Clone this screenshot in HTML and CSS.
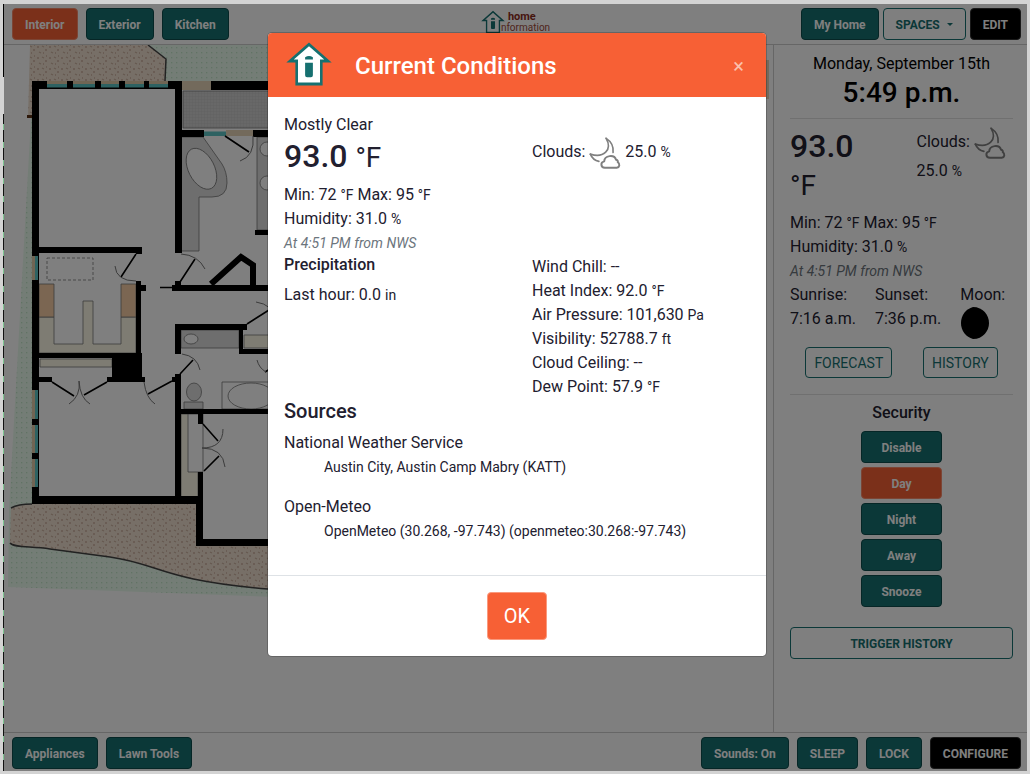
FILE: index.html
```html
<!DOCTYPE html>
<html lang="en">
<head>
<meta charset="utf-8">
<meta name="viewport" content="width=device-width, initial-scale=1">
<title>Home Information</title>
<link rel="stylesheet" href="styles.css">
</head>
<body class="page">
<svg class="defs" aria-hidden="true">
  <symbol id="house" viewBox="76 122 142 138">
    <path fill="currentColor" d="M147 125 217 186H189V257H105V186H77Z"/>
    <path fill="#fff" d="M147 136 194 177H181V248H113V177H100Z"/>
    <path fill="currentColor" d="M135 170Q147 162 159 170V177H135ZM135 187H159V226Q159 232 153 232H141Q135 232 135 226Z"/>
  </symbol>
  <symbol id="night-cloud" viewBox="268 51 97 97">
    <g fill="none" stroke="#808080" stroke-width="5" stroke-linecap="round" stroke-linejoin="round">
      <path d="M320 55C334 64 343 80 341 98"/>
      <path d="M320 55C340 90 312 116 272 103"/>
      <path d="M272 103C277 115 287 123 298 125"/>
      <path d="M316 144C303 143 302 128 314 125C315 106 345 103 350 120C356 121 356 126 355 127C363 133 361 143 352 144Z" stroke-width="6"/>
    </g>
  </symbol>
</svg>
<div class="edge"></div>
<div class="app">
  <header class="bar bar-top">
    <nav class="group">
      <button class="btn btn-active">Interior</button>
      <button class="btn">Exterior</button>
      <button class="btn">Kitchen</button>
    </nav>
    <div class="brand">
      <svg class="brand-icon" aria-hidden="true"><use href="#house"/></svg>
      <div class="brand-text"><span class="brand-home">home</span><span class="brand-info">nformation</span></div>
    </div>
    <div class="group group-end group-tight">
      <button class="btn">My Home</button>
      <button class="btn btn-outline" aria-haspopup="true">SPACES <span class="caret"></span></button>
      <button class="btn btn-dark">EDIT</button>
    </div>
  </header>

  <div class="middle">
    <main class="plan">
      <svg class="plan-drawing" viewBox="4 45 769 687" preserveAspectRatio="xMinYMin slice" role="img" aria-label="Floor plan">
        <defs>
          <pattern id="stone" width="12" height="11" patternUnits="userSpaceOnUse">
            <rect width="12" height="11" fill="#eedfcf"/>
            <path d="M1 3h2M6 2l2 1M9 6h2M3 8l2 1M7 9h1M10 1h1" stroke="#cdb09f" stroke-width="1.3"/>
          </pattern>
          <pattern id="grass" width="5" height="5" patternUnits="userSpaceOnUse">
            <rect width="5" height="5" fill="#e9fbed"/>
            <rect x="1" y="2" width="1.3" height="1.3" fill="#c3e6c9"/>
          </pattern>
          <pattern id="pin" width="3" height="3" patternUnits="userSpaceOnUse">
            <rect width="3" height="3" fill="#d0d0d0"/>
            <path d="M0 0V3M0 0H3" stroke="#bcbcbc" stroke-width=".6"/>
          </pattern>
        </defs>
        <path fill="url(#grass)" d="M140 45H300V84H140ZM31 118H34V505H200V546H300V598L8 587 9 510Z"/>
        <path fill="url(#stone)" d="M30 45H148L166 59 165 84H32V118H28Z"/>
        <path d="M148 45 166 59 165 81" fill="none" stroke="#444" stroke-width="1.5"/>
        <path d="M27 116.500H33" stroke="#5c3317" stroke-width="3"/>
        <path fill="#fff" d="M32 81H300V546H197V504H32Z"/>
        <path fill="url(#stone)" d="M32 504Q18 504 11 508L10 543C14 548 30 546 50 549C80 553 95 555 110 557C160 564 160 580 268 589H300V546H197V504Z"/>
        <path fill="none" stroke="#444" stroke-width="1.5" d="M32 504Q18 504 11 508M10 543C14 548 30 546 50 549C80 553 95 555 110 557C160 564 160 580 268 589"/>

        <g stroke="#777" stroke-width=".8">
          <path fill="url(#pin)" d="M183 91H300V128H183Z"/>
          <path fill="#dcdcdc" d="M181 137H203L222 164Q227 172 227 183Q227 197 212 197H199V251H181ZM257 137H300V230H257Z"/>
          <ellipse fill="#fff" cx="201.500" cy="169" rx="13" ry="22" transform="rotate(-27 201 169)"/>
          <circle fill="#fff" cx="267" cy="149" r="7"/><circle fill="#fff" cx="267" cy="183" r="7"/>
          <path fill="none" stroke-dasharray="3 2" d="M47 258H93V280H47Z"/>
          <path fill="#fcf8e6" d="M39 317H54V344H83V301H93V344H121V317H136V353H39ZM40 359H112V367H40ZM244 335H300V348H244ZM181 414H198V497H181Z"/>
          <path fill="#f6cda4" d="M39 284H54V317H39ZM121 284H136V317H121Z"/>
          <path fill="#fff" d="M188 414H203V472H188Z"/>
          <path fill="#dcdcdc" d="M181 330H239V348H181ZM184 402H203V409H184Z"/>
          <ellipse fill="#fff" cx="191" cy="339" rx="7" ry="5"/>
          <ellipse fill="#dcdcdc" cx="194" cy="392" rx="7.500" ry="9"/>
          <path fill="none" d="M222 382H300V409H222Z"/>
          <ellipse fill="#fff" cx="251" cy="396" rx="23" ry="13"/>
        </g>
        <path d="M32 81H182V137H175V89H32ZM182 130H204V137H182ZM175 89H182V253H175ZM32 81H39V504H32ZM39 247H142V254H136V253H39ZM136 281H141V285H146V291H141V382H136ZM39 353H141V358H39ZM112 353H142V382H112ZM107 377H145V382H107ZM39 377H52V382H39ZM172 285H300V291H172ZM175 281H181V285H175ZM253 130H300V137H253ZM211 81H300V90H211ZM255 230H300V235H255ZM175 324H247V330H181V354H175ZM239 330H243V349H300V354H239ZM172 377H175V374H181V409H300V414H181V497H175V382H172ZM198 414H203V424H198ZM32 496H198V504H32ZM198 472H203V539H300V546H196V496H198Z"/>
        <path fill="#e6d4b8" d="M182 81H211V90H182ZM226 130H253V136H226ZM740 60H769V99H740Z"/>
        <path fill="#e0cba8" d="M47 81H67V84H47ZM73 81H95V84H73ZM101 81H119V84H101ZM125 81H144V84H125ZM149 81H168V84H149ZM32 256H35V280H32ZM32 390H35V419H32ZM32 425H35V453H32ZM32 459H35V487H32Z"/>
        <path fill="#5cc4c4" d="M47 84H67V87.500H47ZM73 84H95V87.500H73ZM101 84H119V87.500H101ZM125 84H144V87.500H125ZM149 84H168V87.500H149ZM35 256H38V280H35ZM35 390H38V419H35ZM35 425H38V453H35ZM35 459H38V487H35ZM204 131.500H226V136H204Z"/>
        <path d="M211 284 241 257 253 265V288" fill="none" stroke="#000" stroke-width="6"/>
        <path d="M136 254 121 277M180 282 195 259M160 287.500H172M225 136 249 152M52 382 74 396M107 382 84 395M172 381 148 394M180 374 193 360M247 324 269 310M203 424 218 441M204 471 219 456M265 372 270 369" fill="none" stroke="#000" stroke-width="1.600"/>
        <path d="M115 266Q116 281 136 281M181 254Q198 255 205 269M253 136Q255 156 240 161M79 381Q81 396 69 404M79 381Q80 398 90 404M144 382Q146 398 155 404M182 354Q197 356 200 370M256 302Q264 303 270 308M223 429Q223 448 202 448M225 467Q223 448 202 448M257 360Q259 368 266 372" fill="none" stroke="#777"/>
      </svg>
    </main>

    <aside class="side">
      <div class="date">Monday, September 15th</div>
      <div class="time">5:49 p.m.</div>
      <hr class="rule">
      <div class="cols">
        <div class="temp">93.0 <span class="unit">°F</span></div>
        <div>Clouds: <svg class="sky" aria-hidden="true"><use href="#night-cloud"/></svg> 25.0 <span class="unit">%</span></div>
      </div>
      <div>Min: 72 <span class="unit">°F</span> Max: 95 <span class="unit">°F</span></div>
      <div>Humidity: 31.0 <span class="unit">%</span></div>
      <div class="stamp">At 4:51 PM from NWS</div>
      <div class="sun">
        <div>Sunrise:<br>7:16 a.m.</div>
        <div>Sunset:<br>7:36 p.m.</div>
        <div>Moon:<svg class="moon" viewBox="0 0 28 32" aria-label="New moon"><path d="M12 0C22 0 28 8 28 16S22 32 12 32C5 30 0 24 0 16S5 2 12 0Z"/></svg></div>
      </div>
      <div class="links">
        <button class="btn btn-outline btn-light">FORECAST</button>
        <button class="btn btn-outline btn-light">HISTORY</button>
      </div>
      <hr class="rule">
      <h2 class="side-title">Security</h2>
      <div class="modes">
        <button class="btn">Disable</button>
        <button class="btn btn-active">Day</button>
        <button class="btn">Night</button>
        <button class="btn">Away</button>
        <button class="btn">Snooze</button>
      </div>
      <button class="btn btn-outline btn-wide">TRIGGER HISTORY</button>
    </aside>
  </div>

  <footer class="bar bar-bottom">
    <div class="group">
      <button class="btn">Appliances</button>
      <button class="btn">Lawn Tools</button>
    </div>
    <div class="group group-end">
      <button class="btn">Sounds: On</button>
      <button class="btn">SLEEP</button>
      <button class="btn">LOCK</button>
      <button class="btn btn-dark">CONFIGURE</button>
    </div>
  </footer>

  <div class="backdrop">
    <section class="modal" role="dialog" aria-modal="true" aria-labelledby="modal-title">
      <div class="modal-head">
        <svg class="modal-icon" aria-hidden="true"><use href="#house"/></svg>
        <h1 class="modal-title" id="modal-title">Current Conditions</h1>
        <button class="close" aria-label="Close">×</button>
      </div>
      <div class="modal-body">
        <div>Mostly Clear</div>
        <div class="cols">
          <div class="temp">93.0 <span class="unit">°F</span></div>
          <div>Clouds: <svg class="sky" aria-hidden="true"><use href="#night-cloud"/></svg> 25.0 <span class="unit">%</span></div>
        </div>
        <div>Min: 72 <span class="unit">°F</span> Max: 95 <span class="unit">°F</span></div>
        <div>Humidity: 31.0 <span class="unit">%</span></div>
        <div class="stamp">At 4:51 PM from NWS</div>
        <div class="cols">
          <div>
            <h3 class="sub">Precipitation</h3>
            <div>Last hour: 0.0 <span class="unit">in</span></div>
          </div>
          <div>
            <div>Wind Chill: --</div>
            <div>Heat Index: 92.0 <span class="unit">°F</span></div>
            <div>Air Pressure: 101,630 <span class="unit">Pa</span></div>
            <div>Visibility: 52788.7 <span class="unit">ft</span></div>
            <div>Cloud Ceiling: --</div>
            <div>Dew Point: 57.9 <span class="unit">°F</span></div>
          </div>
        </div>
        <h2 class="sources">Sources</h2>
        <div class="source">National Weather Service<div class="station">Austin City, Austin Camp Mabry (KATT)</div></div>
        <div class="source">Open-Meteo<div class="station">OpenMeteo (30.268, -97.743) (openmeteo:30.268:-97.743)</div></div>
      </div>
      <div class="modal-foot"><button class="ok">OK</button></div>
    </section>
  </div>
</div>
</body>
</html>
```
FILE: styles.css
```css
*, *::before, *::after { box-sizing: border-box; }

.page {
  margin: 0;
  min-height: 100vh;
  padding: 4px 3px 3px;
  display: grid;
  grid-template-columns: 1px 1fr;
  background: #d3d3d3;
  color: #22202f;
  font: 400 16px/24px Roboto, "Liberation Sans", sans-serif;
}

.defs { position: absolute; width: 0; height: 0; }

.edge {
  background:
    linear-gradient(#000 73px, #d3d3d3 73px 110px, transparent 110px),
    repeating-linear-gradient(#111 0 12px, #7fc492 12px 18px);
}

.app {
  position: relative;
  display: flex;
  flex-direction: column;
  background: #fff;
}

.bar {
  display: grid;
  align-items: center;
  padding: 4px 6px 4px 8px;
}
.bar-top { grid-template-columns: 1fr auto 1fr; border-bottom: 1px solid #ccc; }
.bar-bottom { grid-template-columns: auto auto; padding-bottom: 2px; border-top: 1px solid #ccc; }

.group { display: flex; gap: 8px; }
.group-end { justify-content: flex-end; }
.group-tight { gap: 4px; }

.btn {
  height: 32px;
  padding: 1px 12px 0;
  border: 1px solid #0c4c4c;
  border-radius: 4px;
  background: #167070;
  color: #fff;
  font: 700 12px/18px Roboto, "Liberation Sans", sans-serif;
  white-space: nowrap;
}
.btn-active { background: #f76035; border-color: #f98a6a; }
.btn-dark { background: #000; border-color: #333; }
.btn-outline { background: #fff; border-color: #167070; color: #167070; }
.btn-light { height: 31px; padding: 0 8px; font-size: 14px; font-weight: 400; }
.btn-wide { width: 100%; }

.caret {
  display: inline-block;
  margin-left: 4px;
  border: 3px solid transparent;
  border-top-color: currentColor;
  border-bottom: 0;
  vertical-align: 3px;
}

.brand { display: flex; align-items: center; padding: 0 2px 4px 0; color: #167070; }
.brand-icon { width: 24px; height: 24px; margin-right: -4px; }
.brand-text { display: flex; flex-direction: column; font-size: 10px; line-height: 11px; color: #a04a38; }
.brand-home { padding-left: 7px; font-size: 11px; font-weight: 700; color: #8c2c1c; }

.middle { flex: 1; display: flex; min-height: 0; }
.plan { flex: 1; min-width: 0; overflow: hidden; }
.plan-drawing { display: block; width: 100%; height: 100%; }

.side {
  flex: 0 0 254px;
  padding: 7px 14px 16px 16px;
  border-left: 1px solid #ccc;
}
.date, .time { text-align: center; color: #000; }
.time { font-size: 28px; font-weight: 500; line-height: 34px; }
.rule { width: 100%; margin: 8px 0; border: 0; border-top: 1px solid #e0e0e0; }

.cols { display: grid; grid-template-columns: 1fr 1fr; column-gap: 30px; }
.temp { margin-bottom: 8px; font-size: 32px; font-weight: 500; line-height: 38px; }
.unit { font-size: 14px; font-weight: 400; line-height: 1; }
.temp .unit { font-size: 28px; }
.sky { width: 32px; height: 32px; vertical-align: middle; }
.stamp { font-size: 14px; font-style: italic; color: #6c757d; }

.sun { display: flex; gap: 19px; }
.moon { display: block; width: 28px; height: 32px; margin-left: 1px; }
.links { display: flex; justify-content: space-around; margin: 8px 0 16px; }
.side-title { margin: 0 0 8px; font-size: 16px; font-weight: 500; line-height: 20px; text-align: center; }
.modes { display: grid; gap: 4px; width: 81px; margin: 0 auto 20px; }

.backdrop {
  position: absolute;
  inset: 0;
  padding: 28px 0 28px 3px;
  background: rgba(0, 0, 0, .5);
}
.modal {
  max-width: 500px;
  margin: 0 auto;
  overflow: hidden;
  border: 1px solid rgba(0, 0, 0, .2);
  border-radius: 5px;
  background: #fff;
  background-clip: padding-box;
}
.modal-head {
  display: flex;
  align-items: center;
  height: 64px;
  padding: 0 18px;
  background: #f76035;
}
.modal-icon { width: 46px; height: 46px; margin-bottom: 2px; color: #167070; }
.modal-title { flex: 1; margin: 2px 0 0 23px; font-size: 24px; font-weight: 500; line-height: 36px; color: #fff; }
.close { padding: 2px 4px 0; border: 0; background: none; color: #fbc0ae; font: 400 20px/24px Roboto, "Liberation Sans", sans-serif; }

.modal-body { padding: 16px; }
.sub { margin: 0 0 8px; font-size: 16px; font-weight: 500; line-height: 20px; }
.sources { margin: 0 0 8px; font-size: 20px; font-weight: 500; line-height: 24px; }
.source { margin-bottom: 16px; }
.station { padding-left: 40px; font-size: 14px; }

.modal-foot { display: flex; justify-content: center; padding: 16px; border-top: 1px solid #dee2e6; }
.ok {
  height: 48px;
  padding: 0 16px;
  border: 1px solid #fa9a7e;
  border-radius: 4px;
  background: #f76035;
  color: #fff;
  font: 400 20px/30px Roboto, "Liberation Sans", sans-serif;
}
```
